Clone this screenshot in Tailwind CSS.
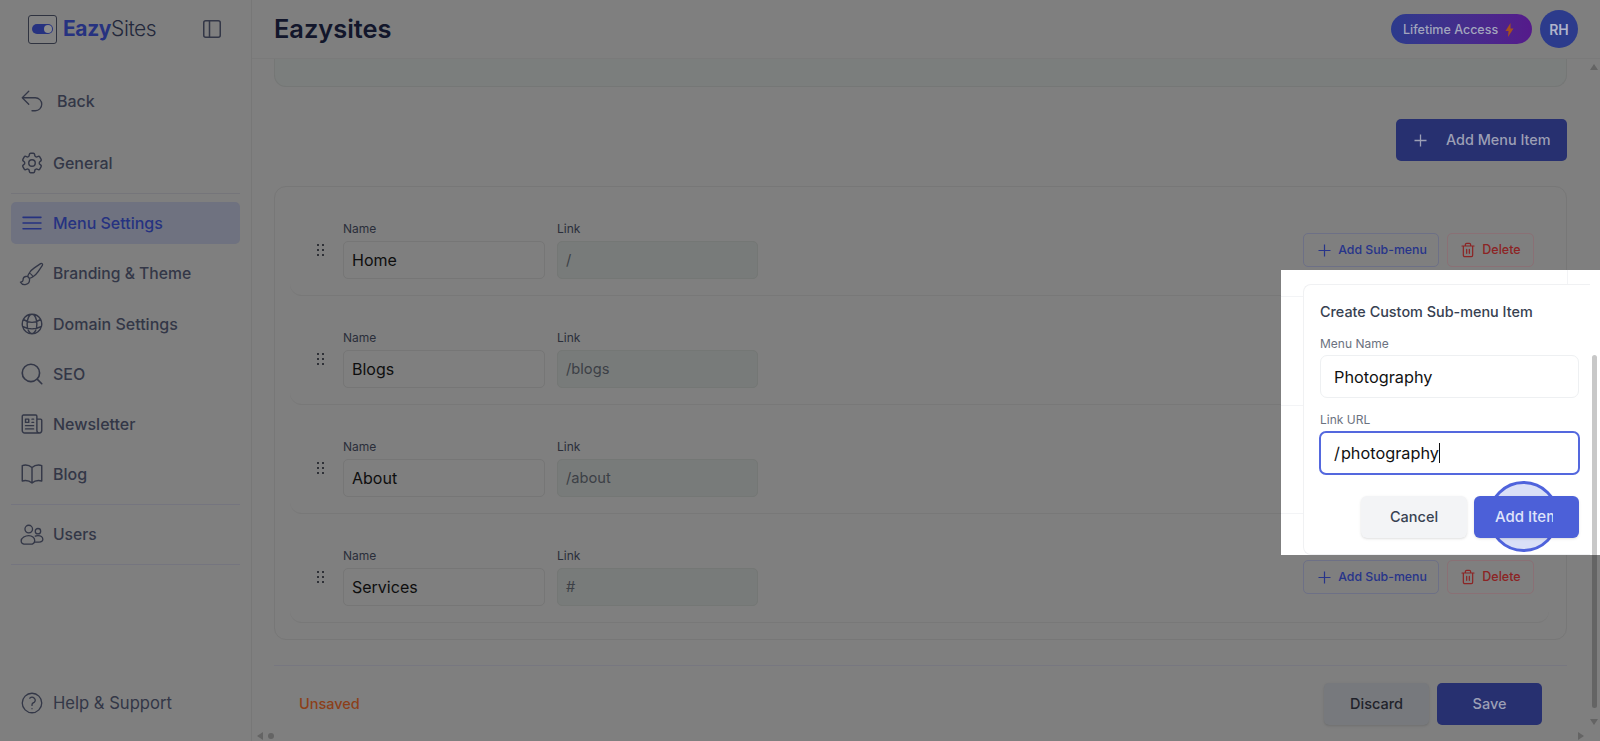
<!doctype html>
<html lang="en">
<head>
<meta charset="utf-8">
<title>Eazysites</title>
<script src="https://cdn.jsdelivr.net/npm/@tailwindcss/browser@4"></script>
</head>
<body class="relative h-[741px] w-[1600px] overflow-hidden bg-[#7f7f7f] font-['Inter',sans-serif]">
<div class="flex h-full">
  <aside class="flex w-[252px] shrink-0 flex-col border-r border-[#777777] bg-[#7f7f7f] px-[11px] text-[#333747]">
    <div class="flex h-[58px] items-center">
      <div class="ml-[17px] flex h-[29px] w-[29px] items-center justify-center rounded-[3px] border border-[#2f3340] bg-[#828282]">
        <div class="flex h-[10px] w-[21px] items-center justify-end rounded-full bg-[#263280] pr-[1px]"><div class="h-[8px] w-[8px] rounded-full bg-[#8c8c8c]"></div></div>
      </div>
      <div class="ml-[6px] text-[21px] tracking-[-0.4px] text-[#23283b]"><span class="font-bold text-[#263280]">Eazy</span><span class="font-light">Sites</span></div>
      <svg class="ml-[46px]" width="20" height="20" viewBox="0 0 20 20" fill="none" stroke="#333747" stroke-width="1.5"><rect x="1.75" y="1.75" width="16.5" height="16.5" rx="2"/><path d="M7.5 2v16"/></svg>
    </div>
    <div class="mt-[26px] flex h-[34px] items-center gap-[12px] pl-[8px] text-[16px] font-medium">
      <svg class="h-[26px] w-[26px]" viewBox="0 0 24 24" fill="none" stroke="currentColor" stroke-width="1.2" stroke-linecap="round" stroke-linejoin="round"><path d="M9 15 3 9m0 0 6-6M3 9h12a6 6 0 0 1 0 12h-3"/></svg>
      <span>Back</span>
    </div>
    <div class="mt-[28px] flex h-[34px] items-center gap-2 pl-[8px] text-[16px] font-medium">
      <svg class="h-[26px] w-[26px]" viewBox="0 0 24 24" fill="none" stroke="currentColor" stroke-width="1.3" stroke-linecap="round" stroke-linejoin="round"><path d="M9.594 3.94c.09-.542.56-.94 1.11-.94h2.593c.55 0 1.02.398 1.11.94l.213 1.281c.063.374.313.686.645.87.074.04.147.083.22.127.325.196.72.257 1.075.124l1.217-.456a1.125 1.125 0 0 1 1.37.49l1.296 2.247a1.125 1.125 0 0 1-.26 1.431l-1.003.827c-.293.241-.438.613-.43.992a7.723 7.723 0 0 1 0 .255c-.008.378.137.75.43.991l1.004.827c.424.35.534.955.26 1.43l-1.298 2.247a1.125 1.125 0 0 1-1.369.491l-1.217-.456c-.355-.133-.75-.072-1.076.124a6.47 6.47 0 0 1-.22.128c-.331.183-.581.495-.644.869l-.213 1.281c-.09.543-.56.94-1.11.94h-2.594c-.55 0-1.019-.398-1.11-.94l-.213-1.281c-.062-.374-.312-.686-.644-.87a6.52 6.52 0 0 1-.22-.127c-.325-.196-.72-.257-1.076-.124l-1.217.456a1.125 1.125 0 0 1-1.369-.49l-1.297-2.247a1.125 1.125 0 0 1 .26-1.431l1.004-.827c.292-.24.437-.613.43-.991a6.932 6.932 0 0 1 0-.255c.007-.38-.138-.751-.43-.992l-1.004-.827a1.125 1.125 0 0 1-.26-1.43l1.297-2.247a1.125 1.125 0 0 1 1.37-.491l1.216.456c.356.133.751.072 1.076-.124.072-.044.146-.086.22-.128.332-.183.582-.495.644-.869l.214-1.28Z"/><path d="M15 12a3 3 0 1 1-6 0 3 3 0 0 1 6 0Z"/></svg>
      <span>General</span>
    </div>
    <div class="mt-[13px] h-px bg-[#75757a]"></div>
    <div class="mt-[8px] flex h-[42px] items-center gap-2 rounded-[5px] bg-[#6f7280] pl-[8px] text-[16px] font-medium text-[#263280]">
      <svg class="h-[26px] w-[26px]" viewBox="0 0 24 24" fill="none" stroke="currentColor" stroke-width="1.5" stroke-linecap="round"><path d="M3.75 6.75h16.5M3.75 12h16.5m-16.5 5.25h16.5"/></svg>
      <span>Menu Settings</span>
    </div>
    <div class="mt-[13px] flex h-[34px] items-center gap-2 pl-[8px] text-[15.7px] font-medium">
      <svg class="h-[26px] w-[26px]" viewBox="0 0 24 24" fill="none" stroke="currentColor" stroke-width="1.2" stroke-linecap="round" stroke-linejoin="round"><path d="M9.53 16.122a3 3 0 0 0-5.78 1.128 2.25 2.25 0 0 1-2.4 2.245 4.5 4.5 0 0 0 8.4-2.245c0-.399-.078-.78-.22-1.128Zm0 0a15.998 15.998 0 0 0 3.388-1.62m-5.043-.025a15.994 15.994 0 0 1 1.622-3.395m3.42 3.42a15.995 15.995 0 0 0 4.764-4.648l3.876-5.814a1.151 1.151 0 0 0-1.597-1.597L14.146 6.32a15.996 15.996 0 0 0-4.649 4.763m3.42 3.42a6.776 6.776 0 0 0-3.42-3.42"/></svg>
      <span>Branding &amp; Theme</span>
    </div>
    <div class="mt-[16px] flex h-[34px] items-center gap-2 pl-[8px] text-[16px] font-medium">
      <svg class="h-[26px] w-[26px]" viewBox="0 0 24 24" fill="none" stroke="currentColor" stroke-width="1.3" stroke-linecap="round" stroke-linejoin="round"><path d="M12 21a9.004 9.004 0 0 0 8.716-6.747M12 21a9.004 9.004 0 0 1-8.716-6.747M12 21c2.485 0 4.5-4.03 4.5-9S14.485 3 12 3m0 18c-2.485 0-4.5-4.03-4.5-9S9.515 3 12 3m0 0a8.997 8.997 0 0 1 7.843 4.582M12 3a8.997 8.997 0 0 0-7.843 4.582m15.686 0A11.953 11.953 0 0 1 12 10.5c-2.998 0-5.74-1.1-7.843-2.918m15.686 0A8.959 8.959 0 0 1 21 12c0 .778-.099 1.533-.284 2.253m0 0A17.919 17.919 0 0 1 12 16.5c-3.162 0-6.133-.815-8.716-2.247m0 0A9.015 9.015 0 0 1 3 12c0-1.605.42-3.113 1.157-4.418"/></svg>
      <span>Domain Settings</span>
    </div>
    <div class="mt-[16px] flex h-[34px] items-center gap-2 pl-[8px] text-[16px] font-medium">
      <svg class="h-[26px] w-[26px]" viewBox="0 0 24 24" fill="none" stroke="currentColor" stroke-width="1.5" stroke-linecap="round"><circle cx="11" cy="11" r="8"/><path d="m17 17 4 4"/></svg>
      <span>SEO</span>
    </div>
    <div class="mt-[16px] flex h-[34px] items-center gap-2 pl-[8px] text-[16px] font-medium">
      <svg class="h-[26px] w-[26px]" viewBox="0 0 24 24" fill="none" stroke="currentColor" stroke-width="1.3" stroke-linecap="round" stroke-linejoin="round"><path d="M12 7.5h1.5m-1.5 3h1.5m-7.5 3h7.5m-7.5 3h7.5m3-9h3.375c.621 0 1.125.504 1.125 1.125V18a2.25 2.25 0 0 1-2.25 2.25M16.5 7.5V18a2.25 2.25 0 0 0 2.25 2.25M16.5 7.5V4.875c0-.621-.504-1.125-1.125-1.125H4.125C3.504 3.75 3 4.254 3 4.875V18a2.25 2.25 0 0 0 2.25 2.25h13.5M6 7.5h3v3H6v-3Z"/></svg>
      <span>Newsletter</span>
    </div>
    <div class="mt-[16px] flex h-[34px] items-center gap-2 pl-[8px] text-[16px] font-medium">
      <svg class="h-[26px] w-[26px]" viewBox="0 0 24 24" fill="none" stroke="currentColor" stroke-width="1.3" stroke-linecap="round" stroke-linejoin="round"><path d="M12 6.042A8.967 8.967 0 0 0 6 3.75c-1.052 0-2.062.18-3 .512v14.25A8.987 8.987 0 0 1 6 18c2.305 0 4.408.867 6 2.292m0-14.25a8.966 8.966 0 0 1 6-2.292c1.052 0 2.062.18 3 .512v14.25A8.987 8.987 0 0 0 18 18a8.967 8.967 0 0 0-6 2.292m0-14.25v14.25"/></svg>
      <span>Blog</span>
    </div>
    <div class="mt-[13px] h-px bg-[#75757f]"></div>
    <div class="mt-[13px] flex h-[34px] items-center gap-2 pl-[8px] text-[15.7px] font-medium">
      <svg class="h-[26px] w-[26px]" viewBox="0 0 24 24" fill="none" stroke="currentColor" stroke-width="1.2" stroke-linecap="round" stroke-linejoin="round"><circle cx="9" cy="6.5" r="3.5"/><circle cx="17.5" cy="8.5" r="2.5"/><path d="M14.5 17c0-2.5-2.5-4.5-5.5-4.5S2 14.500 2 17.500c0 2 2 3 4.500 3h4c2.500 0 4-1.500 4-3.500Z"/><path d="M15 13c.7-.4 1.500-.5 2.500-.5 2.500 0 4.500 1.500 4.500 3.500 0 1.500-1.500 2.500-3.500 2.500h-4"/></svg>
      <span>Users</span>
    </div>
    <div class="mt-[12px] h-px bg-[#75757f]"></div>
    <div class="mt-auto mb-[21px] flex h-[34px] items-center gap-2 pl-[8px] text-[16.6px] font-normal">
      <svg class="h-[26px] w-[26px]" viewBox="0 0 24 24" fill="none" stroke="currentColor" stroke-width="1.2" stroke-linecap="round" stroke-linejoin="round"><path d="M9.879 7.519c1.171-1.025 3.071-1.025 4.242 0 1.172 1.025 1.172 2.687 0 3.712-.203.179-.43.326-.67.442-.745.361-1.45.999-1.45 1.827v.75M21 12a9 9 0 1 1-18 0 9 9 0 0 1 18 0Zm-9 5.25h.008v.008H12v-.008Z"/></svg>
      <span>Help &amp; Support</span>
    </div>
  </aside>

  <main class="flex min-w-0 flex-1 flex-col">
    <header class="flex h-[59px] shrink-0 items-center border-b border-[#7a7a7a] pl-[22px] pr-[22px]">
      <h1 class="text-[25.4px] font-semibold text-[#12162b]">Eazysites</h1>
      <div class="ml-auto flex h-[30px] w-[141px] items-center gap-[5px] rounded-full bg-gradient-to-r from-[#2b3a8c] to-[#551a8b] pl-[12px] pt-[2px] text-[12.5px] font-medium text-[#a2a5bd]">
        <span>Lifetime Access</span>
        <svg class="ml-[2px]" width="9" height="14" viewBox="0 0 9 14"><path d="M5.500 0 0.500 8h3L3 14l5.500-8.500h-3Z" fill="#a5501f"/></svg>
      </div>
      <div class="ml-[8px] flex h-[38px] w-[38px] items-center justify-center rounded-full bg-[#2c3b8c] text-[14px] font-semibold text-[#b0b3cb]">RH</div>
    </header>

    <div class="ml-[22px] mr-[33px] flex flex-1 flex-col">
      <div class="h-[28px] shrink-0 rounded-b-xl border border-t-0 border-[#757776] bg-[#7b7e7d]"></div>

      <div class="mt-[32px] flex justify-end">
        <button class="flex h-[42px] w-[171px] items-center gap-[18px] rounded-[5px] bg-[#273070] pl-[17px] text-[14.4px] font-medium text-[#9c9fb5]">
          <svg width="15" height="15" viewBox="0 0 15 15" fill="none" stroke="currentColor" stroke-width="1.300"><path d="M7.500 1.500v12M1.500 7.500h12"/></svg>
          <span>Add Menu Item</span>
        </button>
      </div>

      <section class="mt-[25px] h-[454px] shrink-0 rounded-xl border border-[#777777] pb-4 pl-[15px] pr-[17px]">
        <div class="flex h-[109px] items-end rounded-b-xl border-b border-[#787878] pb-[16px] pl-[27px] pr-[15px]">
          <div class="mb-[23px] grid w-[7px] grid-cols-2 gap-x-[3px] gap-y-[3px]"><i class="size-[2px] rounded-full bg-[#15171f]"></i><i class="size-[2px] rounded-full bg-[#15171f]"></i><i class="size-[2px] rounded-full bg-[#15171f]"></i><i class="size-[2px] rounded-full bg-[#15171f]"></i><i class="size-[2px] rounded-full bg-[#15171f]"></i><i class="size-[2px] rounded-full bg-[#15171f]"></i></div>
          <div class="ml-[19px] w-[202px]"><div class="mb-[4px] text-[12px] leading-4 text-[#2a2e3a]">Name</div><div class="flex h-[38px] items-center rounded-[5px] border border-[#767676] bg-[#7f7f7f] px-[8px] text-[16px] text-[#0e0e0e]">Home</div></div>
          <div class="ml-[12px] w-[201px]"><div class="mb-[4px] text-[12px] leading-4 text-[#2a2e3a]">Link</div><div class="flex h-[38px] items-center rounded-[5px] border border-[#747775] bg-[#787b7a] px-[8px] text-[14.7px] text-[#3c4046]">/</div></div>
          <div class="mb-[12px] ml-auto flex gap-[8px]">
            <button class="flex h-[34px] w-[136px] items-center justify-center gap-[7px] rounded-[5px] border border-[#6d7086] pl-[3px] text-[12.3px] font-medium text-[#27348a]"><svg width="13" height="13" viewBox="0 0 13 13" fill="none" stroke="currentColor" stroke-width="1.200"><path d="M6.500 .5v12M.5 6.500h12"/></svg>Add Sub-menu</button>
            <button class="flex h-[34px] w-[87px] items-center justify-center gap-[6px] rounded-[5px] border border-[#8a7075] text-[12.500px] font-medium text-[#8c2424]"><svg width="16" height="16" viewBox="0 0 24 24" fill="none" stroke="currentColor" stroke-width="1.8" stroke-linecap="round" stroke-linejoin="round"><path d="M3 6h18M19 6v14c0 1-1 2-2 2H7c-1 0-2-1-2-2V6M8 6V4c0-1 1-2 2-2h4c1 0 2 1 2 2v2M10 11v6M14 11v6"/></svg>Delete</button>
          </div>
        </div>
        <div class="flex h-[109px] items-end rounded-b-xl border-b border-[#787878] pb-[16px] pl-[27px] pr-[15px]">
          <div class="mb-[23px] grid w-[7px] grid-cols-2 gap-x-[3px] gap-y-[3px]"><i class="size-[2px] rounded-full bg-[#15171f]"></i><i class="size-[2px] rounded-full bg-[#15171f]"></i><i class="size-[2px] rounded-full bg-[#15171f]"></i><i class="size-[2px] rounded-full bg-[#15171f]"></i><i class="size-[2px] rounded-full bg-[#15171f]"></i><i class="size-[2px] rounded-full bg-[#15171f]"></i></div>
          <div class="ml-[19px] w-[202px]"><div class="mb-[4px] text-[12px] leading-4 text-[#2a2e3a]">Name</div><div class="flex h-[38px] items-center rounded-[5px] border border-[#767676] bg-[#7f7f7f] px-[8px] text-[16px] text-[#0e0e0e]">Blogs</div></div>
          <div class="ml-[12px] w-[201px]"><div class="mb-[4px] text-[12px] leading-4 text-[#2a2e3a]">Link</div><div class="flex h-[38px] items-center rounded-[5px] border border-[#747775] bg-[#787b7a] px-[8px] text-[14.7px] text-[#3c4046]">/blogs</div></div>
        </div>
        <div class="flex h-[109px] items-end rounded-b-xl border-b border-[#787878] pb-[16px] pl-[27px] pr-[15px]">
          <div class="mb-[23px] grid w-[7px] grid-cols-2 gap-x-[3px] gap-y-[3px]"><i class="size-[2px] rounded-full bg-[#15171f]"></i><i class="size-[2px] rounded-full bg-[#15171f]"></i><i class="size-[2px] rounded-full bg-[#15171f]"></i><i class="size-[2px] rounded-full bg-[#15171f]"></i><i class="size-[2px] rounded-full bg-[#15171f]"></i><i class="size-[2px] rounded-full bg-[#15171f]"></i></div>
          <div class="ml-[19px] w-[202px]"><div class="mb-[4px] text-[12px] leading-4 text-[#2a2e3a]">Name</div><div class="flex h-[38px] items-center rounded-[5px] border border-[#767676] bg-[#7f7f7f] px-[8px] text-[16px] text-[#0e0e0e]">About</div></div>
          <div class="ml-[12px] w-[201px]"><div class="mb-[4px] text-[12px] leading-4 text-[#2a2e3a]">Link</div><div class="flex h-[38px] items-center rounded-[5px] border border-[#747775] bg-[#787b7a] px-[8px] text-[14.7px] text-[#3c4046]">/about</div></div>
        </div>
        <div class="flex h-[109px] items-end rounded-b-xl border-b border-[#787878] pb-[16px] pl-[27px] pr-[15px]">
          <div class="mb-[23px] grid w-[7px] grid-cols-2 gap-x-[3px] gap-y-[3px]"><i class="size-[2px] rounded-full bg-[#15171f]"></i><i class="size-[2px] rounded-full bg-[#15171f]"></i><i class="size-[2px] rounded-full bg-[#15171f]"></i><i class="size-[2px] rounded-full bg-[#15171f]"></i><i class="size-[2px] rounded-full bg-[#15171f]"></i><i class="size-[2px] rounded-full bg-[#15171f]"></i></div>
          <div class="ml-[19px] w-[202px]"><div class="mb-[4px] text-[12px] leading-4 text-[#2a2e3a]">Name</div><div class="flex h-[38px] items-center rounded-[5px] border border-[#767676] bg-[#7f7f7f] px-[8px] text-[16px] text-[#0e0e0e]">Services</div></div>
          <div class="ml-[12px] w-[201px]"><div class="mb-[4px] text-[12px] leading-4 text-[#2a2e3a]">Link</div><div class="flex h-[38px] items-center rounded-[5px] border border-[#747775] bg-[#787b7a] px-[8px] text-[14.7px] text-[#3c4046]">#</div></div>
          <div class="mb-[12px] ml-auto flex gap-[8px]">
            <button class="flex h-[34px] w-[136px] items-center justify-center gap-[7px] rounded-[5px] border border-[#6d7086] pl-[3px] text-[12.3px] font-medium text-[#27348a]"><svg width="13" height="13" viewBox="0 0 13 13" fill="none" stroke="currentColor" stroke-width="1.200"><path d="M6.500 .5v12M.5 6.500h12"/></svg>Add Sub-menu</button>
            <button class="flex h-[34px] w-[87px] items-center justify-center gap-[6px] rounded-[5px] border border-[#8a7075] text-[12.500px] font-medium text-[#8c2424]"><svg width="16" height="16" viewBox="0 0 24 24" fill="none" stroke="currentColor" stroke-width="1.8" stroke-linecap="round" stroke-linejoin="round"><path d="M3 6h18M19 6v14c0 1-1 2-2 2H7c-1 0-2-1-2-2V6M8 6V4c0-1 1-2 2-2h4c1 0 2 1 2 2v2M10 11v6M14 11v6"/></svg>Delete</button>
          </div>
        </div>
      </section>

      <footer class="mt-[25px] flex h-[76px] shrink-0 items-start border-t border-[#777780] pl-[25px] pr-[25px] pt-[17px]">
        <span class="mt-[10px] text-[14.5px] font-medium text-[#8c3f1a]">Unsaved</span>
        <div class="ml-auto flex gap-[8px]">
          <button class="h-[42px] w-[105px] rounded-[5px] bg-[#77797d] text-[14.5px] font-medium text-[#1f222a] shadow-sm">Discard</button>
          <button class="h-[42px] w-[105px] rounded-[5px] bg-[#273070] text-[14.5px] font-medium text-[#9c9fb5]">Save</button>
        </div>
      </footer>
    </div>
  </main>
</div>

<!-- scrollbar details -->
<div class="absolute left-[1590px] top-[64px] h-0 w-0 border-x-[4px] border-b-[6px] border-x-transparent border-b-[#646464]"></div>
<div class="absolute left-[1592px] top-[355px] h-[353px] w-[5px] rounded-full bg-[#646464]"></div>
<div class="absolute left-[1590px] top-[719px] h-0 w-0 border-x-[4px] border-t-[6px] border-x-transparent border-t-[#646464]"></div>
<div class="absolute left-[1578px] top-[732px] h-0 w-0 border-y-[4px] border-l-[6px] border-y-transparent border-l-[#646464]"></div>
<div class="absolute left-[257px] top-[732px] h-0 w-0 border-y-[4px] border-r-[6px] border-y-transparent border-r-[#646464]"></div>
<div class="absolute left-[268px] top-[733px] h-[6px] w-[6px] rounded-full bg-[#646464]"></div>

<!-- highlighted spotlight -->
<div class="absolute left-[1281px] top-[270px] h-[285px] w-[319px] overflow-hidden bg-white">
  <div class="absolute left-0 top-[26px] h-px w-[22px] bg-[#f3f4f6]"></div>
  <div class="absolute left-0 top-[135px] h-px w-[22px] bg-[#f3f4f6]"></div>
  <div class="absolute left-0 top-[243px] h-px w-[22px] bg-[#f3f4f6]"></div>
  <div class="absolute left-[286px] top-0 h-[14px] w-px bg-[#f3f4f6]"></div>
  <div class="absolute left-[22px] top-[14px] h-[271px] w-[287px] rounded-l-[8px] border border-r-0 border-[#f0f1f3] bg-white px-[16px] pt-[17px]">
    <div class="text-[14.400px] leading-5 font-medium text-[#374151]">Create Custom Sub-menu Item</div>
    <div class="mt-[14px] text-[12px] leading-4 text-[#6b7280]">Menu Name</div>
    <div class="mt-[3px] flex h-[43px] w-[259px] items-center rounded-[7px] border border-[#eef0f2] px-[13px] pt-px text-[16.3px] text-[#111111]">Photography</div>
    <div class="mt-[14px] text-[12px] leading-4 text-[#6b7280]">Link URL</div>
    <div class="-ml-px mt-[3px] flex h-[44px] w-[261px] items-center rounded-[7px] border-2 border-[#5468de] px-[13px] text-[16.3px] text-[#111111]"><span class="mr-[1px]">/</span>photography<span class="h-[20px] w-px bg-[#111111]"></span></div>
    <div class="relative mt-[21px] flex w-[259px] justify-end gap-[7px]">
      <div class="absolute left-[168px] top-[-15px] h-[71px] w-[71px] rounded-full border-[3px] border-[#4f63dc] bg-[#d9dff7]"></div>
      <button class="h-[42px] w-[106px] rounded-[6px] bg-[#f3f4f6] text-[14.5px] font-medium text-[#374151] shadow-sm">Cancel</button>
      <button class="relative h-[42px] w-[105px] rounded-[6px] bg-[#4c60d8] pl-[21px] text-left text-[15px] font-medium text-[#dfe3fa] shadow-sm"><span class="block w-[58px] overflow-hidden whitespace-nowrap">Add Item</span></button>
    </div>
  </div>
  <div class="absolute left-[311px] top-[85px] h-[200px] w-[5px] rounded-t-full bg-[#c8c8c8]"></div>
</div>
</body>
</html>
